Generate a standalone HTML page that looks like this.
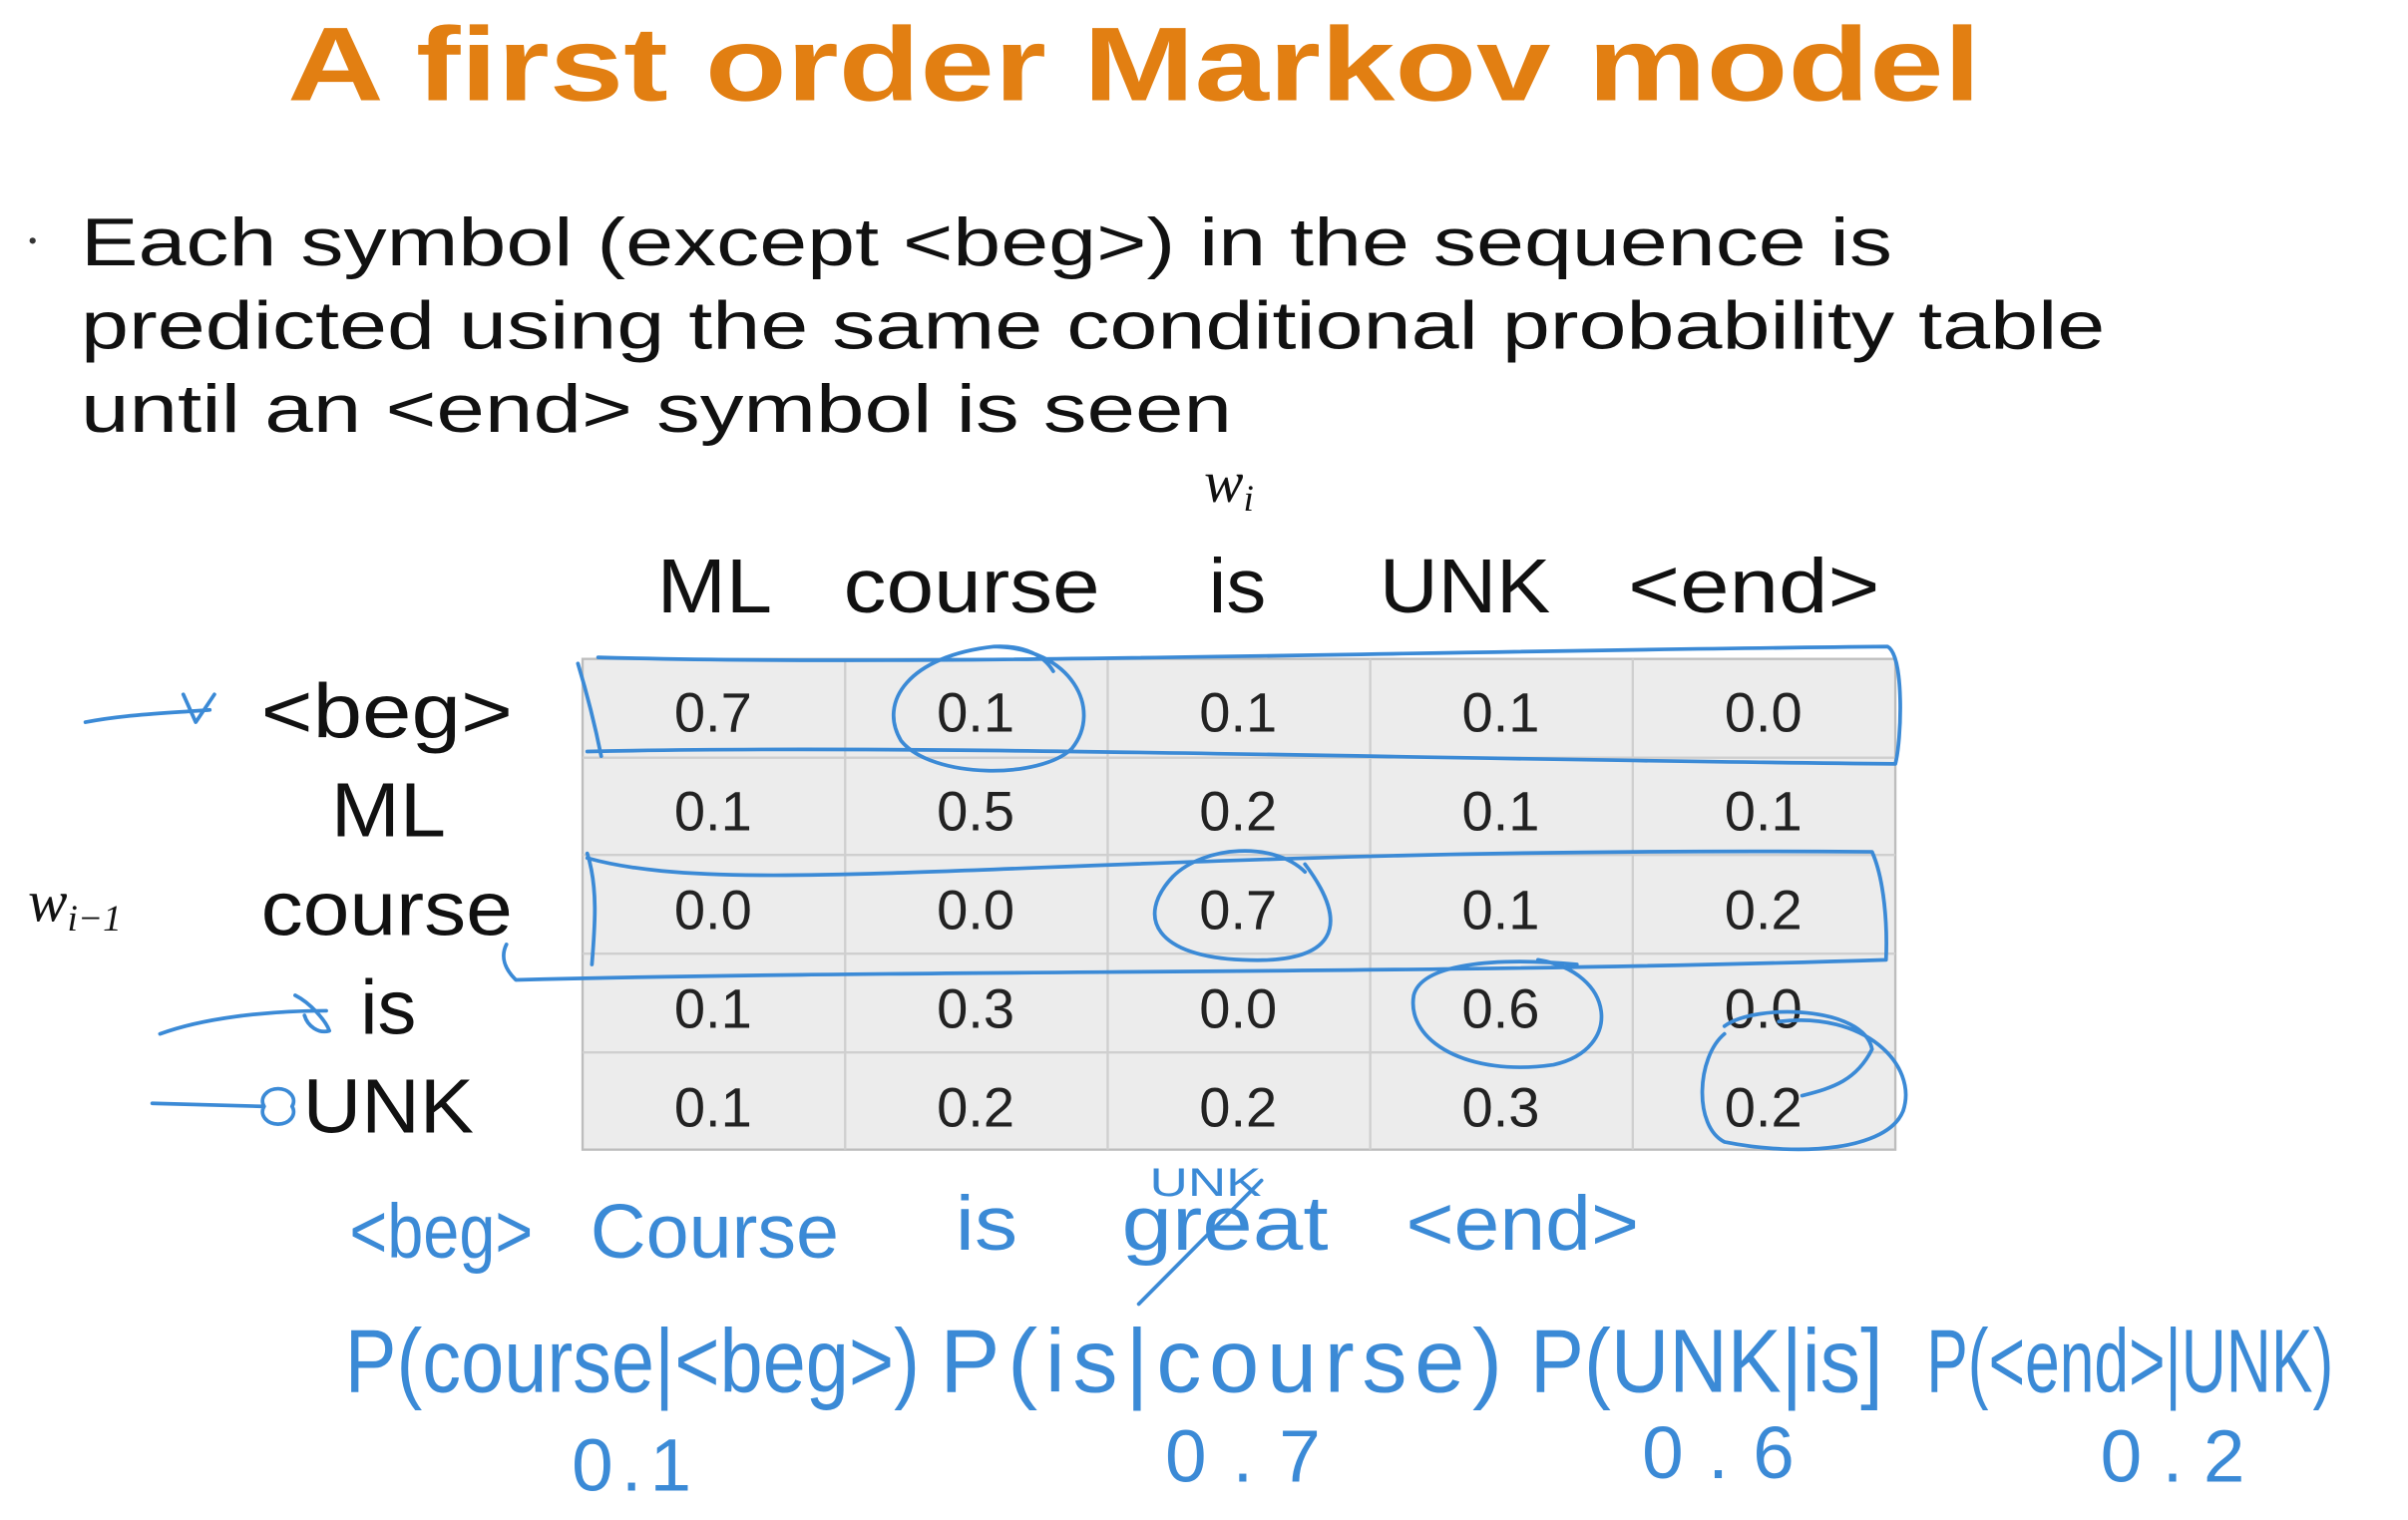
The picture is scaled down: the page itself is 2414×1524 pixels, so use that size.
<!DOCTYPE html>
<html><head><meta charset="utf-8"><style>
html,body{margin:0;padding:0;background:#fff;overflow:hidden}
svg{display:block}
</style></head><body>
<svg width="2414" height="1524" viewBox="0 0 1550 985" preserveAspectRatio="none" xmlns="http://www.w3.org/2000/svg">
<rect width="1550" height="985" fill="#fff"/>
<text x="185" y="65" font-family="Liberation Sans, sans-serif" font-weight="bold" font-size="68" fill="#e27f12" textLength="1090" lengthAdjust="spacingAndGlyphs">A first order Markov model</text>
<circle cx="21" cy="156" r="2" fill="#333"/>
<g font-family="Liberation Sans, sans-serif" font-size="44" fill="#111">
<text x="52" y="172" textLength="1166" lengthAdjust="spacingAndGlyphs">Each symbol (except &lt;beg&gt;) in the sequence is</text>
<text x="52" y="226" textLength="1303" lengthAdjust="spacingAndGlyphs">predicted using the same conditional probability table</text>
<text x="52" y="280" textLength="741" lengthAdjust="spacingAndGlyphs">until an &lt;end&gt; symbol is seen</text>
</g>
<text x="775" y="325" font-family="Liberation Serif, serif" font-style="italic" font-size="38" fill="#111">w<tspan font-size="24" dy="6">i</tspan></text>
<text x="18" y="597" font-family="Liberation Serif, serif" font-style="italic" font-size="38" fill="#111">w<tspan font-size="24" dy="6">i−1</tspan></text>
<g font-family="Liberation Sans, sans-serif" font-size="50" fill="#111">
<text x="423" y="397" textLength="74" lengthAdjust="spacingAndGlyphs">ML</text>
<text x="543" y="397" textLength="165" lengthAdjust="spacingAndGlyphs">course</text>
<text x="778" y="397" textLength="37" lengthAdjust="spacingAndGlyphs">is</text>
<text x="888" y="397" textLength="110" lengthAdjust="spacingAndGlyphs">UNK</text>
<text x="1048" y="397" textLength="162" lengthAdjust="spacingAndGlyphs">&lt;end&gt;</text>
<text x="168" y="478" textLength="162" lengthAdjust="spacingAndGlyphs">&lt;beg&gt;</text>
<text x="213" y="542" textLength="74" lengthAdjust="spacingAndGlyphs">ML</text>
<text x="168" y="606" textLength="162" lengthAdjust="spacingAndGlyphs">course</text>
<text x="232" y="670" textLength="36" lengthAdjust="spacingAndGlyphs">is</text>
<text x="195" y="734" textLength="110" lengthAdjust="spacingAndGlyphs">UNK</text>
</g>
<rect x="375" y="427" width="845" height="318" fill="#ececec" stroke="#bdbdbd" stroke-width="1.5"/>
<g stroke="#cfcfcf" stroke-width="1.5">
<line x1="544" y1="427" x2="544" y2="745"/><line x1="713" y1="427" x2="713" y2="745"/>
<line x1="882" y1="427" x2="882" y2="745"/><line x1="1051" y1="427" x2="1051" y2="745"/>
<line x1="375" y1="491" x2="1220" y2="491"/><line x1="375" y1="554" x2="1220" y2="554"/>
<line x1="375" y1="618" x2="1220" y2="618"/><line x1="375" y1="682" x2="1220" y2="682"/>
</g>
<g font-family="Liberation Sans, sans-serif" font-size="36" fill="#222" text-anchor="middle">
<text x="459" y="474">0.7</text><text x="628" y="474">0.1</text><text x="797" y="474">0.1</text><text x="966" y="474">0.1</text><text x="1135" y="474">0.0</text>
<text x="459" y="538">0.1</text><text x="628" y="538">0.5</text><text x="797" y="538">0.2</text><text x="966" y="538">0.1</text><text x="1135" y="538">0.1</text>
<text x="459" y="602">0.0</text><text x="628" y="602">0.0</text><text x="797" y="602">0.7</text><text x="966" y="602">0.1</text><text x="1135" y="602">0.2</text>
<text x="459" y="666">0.1</text><text x="628" y="666">0.3</text><text x="797" y="666">0.0</text><text x="966" y="666">0.6</text><text x="1135" y="666">0.0</text>
<text x="459" y="730">0.1</text><text x="628" y="730">0.2</text><text x="797" y="730">0.2</text><text x="966" y="730">0.3</text><text x="1135" y="730">0.2</text>
</g>
<g fill="none" stroke="#3b8ad6" stroke-width="2.4" stroke-linecap="round" stroke-linejoin="round">
<path d="M372,430 C378,450 383,470 387,490"/>
<path d="M385,426 C600,432 900,422 1215,419 C1226,425 1224,480 1220,495 C900,492 600,482 378,487"/>
<path d="M640,419 C690,420 710,460 690,485 C670,505 600,505 580,480 C565,455 585,425 640,419 C660,418 672,425 678,435"/>
<path d="M378,553 C385,575 383,600 381,625"/>
<path d="M378,556 C480,585 700,548 1205,552 C1213,570 1215,600 1214,622 C900,632 600,628 332,635 C325,628 322,620 326,612"/>
<path d="M840,560 C870,600 860,625 800,622 C745,620 730,595 755,568 C775,548 820,545 840,565"/>
<path d="M990,622 C1040,630 1045,680 1000,690 C945,698 905,675 910,645 C915,625 960,620 1015,625"/>
<path d="M1110,665 C1130,650 1200,652 1205,680 C1195,700 1180,705 1160,710 M1145,662 C1200,655 1235,690 1225,720 C1215,745 1160,750 1110,740 C1090,730 1092,685 1110,670"/>
<path d="M55,468 C80,463 110,462 135,460 M118,450 L126,468 L138,450"/>
<path d="M103,670 C130,660 170,655 210,655 M190,645 C200,650 210,662 212,668 C205,670 198,665 196,658"/>
<path d="M98,715 L170,717 M170,717 a10,8 0 1,0 18,0 a10,8 0 1,0 -18,0"/>
<path d="M733,845 L812,765"/>
</g>
<g font-family="Liberation Sans, sans-serif" fill="#3b8ad6">
<text x="225" y="815" font-size="50" textLength="118" lengthAdjust="spacingAndGlyphs">&lt;beg&gt;</text>
<text x="380" y="815" font-size="50" textLength="160" lengthAdjust="spacingAndGlyphs">Course</text>
<text x="615" y="810" font-size="50" textLength="40" lengthAdjust="spacingAndGlyphs">is</text>
<text x="722" y="810" font-size="50" textLength="133" lengthAdjust="spacingAndGlyphs">great</text>
<text x="740" y="775" font-size="26" textLength="72" lengthAdjust="spacingAndGlyphs">UNK</text>
<text x="905" y="810" font-size="50" textLength="150" lengthAdjust="spacingAndGlyphs">&lt;end&gt;</text>
<text x="222" y="902" font-size="58" textLength="370" lengthAdjust="spacingAndGlyphs">P(course|&lt;beg&gt;)</text>
<text x="605" y="902" font-size="58" textLength="362" lengthAdjust="spacing">P(is|course)</text>
<text x="985" y="902" font-size="58" textLength="227" lengthAdjust="spacingAndGlyphs">P(UNK|is]</text>
<text x="1240" y="902" font-size="58" textLength="262" lengthAdjust="spacingAndGlyphs">P(&lt;end&gt;|UNK)</text>
<text x="368" y="966" font-size="48" textLength="77" lengthAdjust="spacing">0.1</text>
<text x="750" y="960" font-size="48" textLength="100" lengthAdjust="spacing">0.7</text>
<text x="1057" y="958" font-size="48" textLength="98" lengthAdjust="spacing">0.6</text>
<text x="1352" y="960" font-size="48" textLength="93" lengthAdjust="spacing">0.2</text>
</g>
</svg>
</body></html>
